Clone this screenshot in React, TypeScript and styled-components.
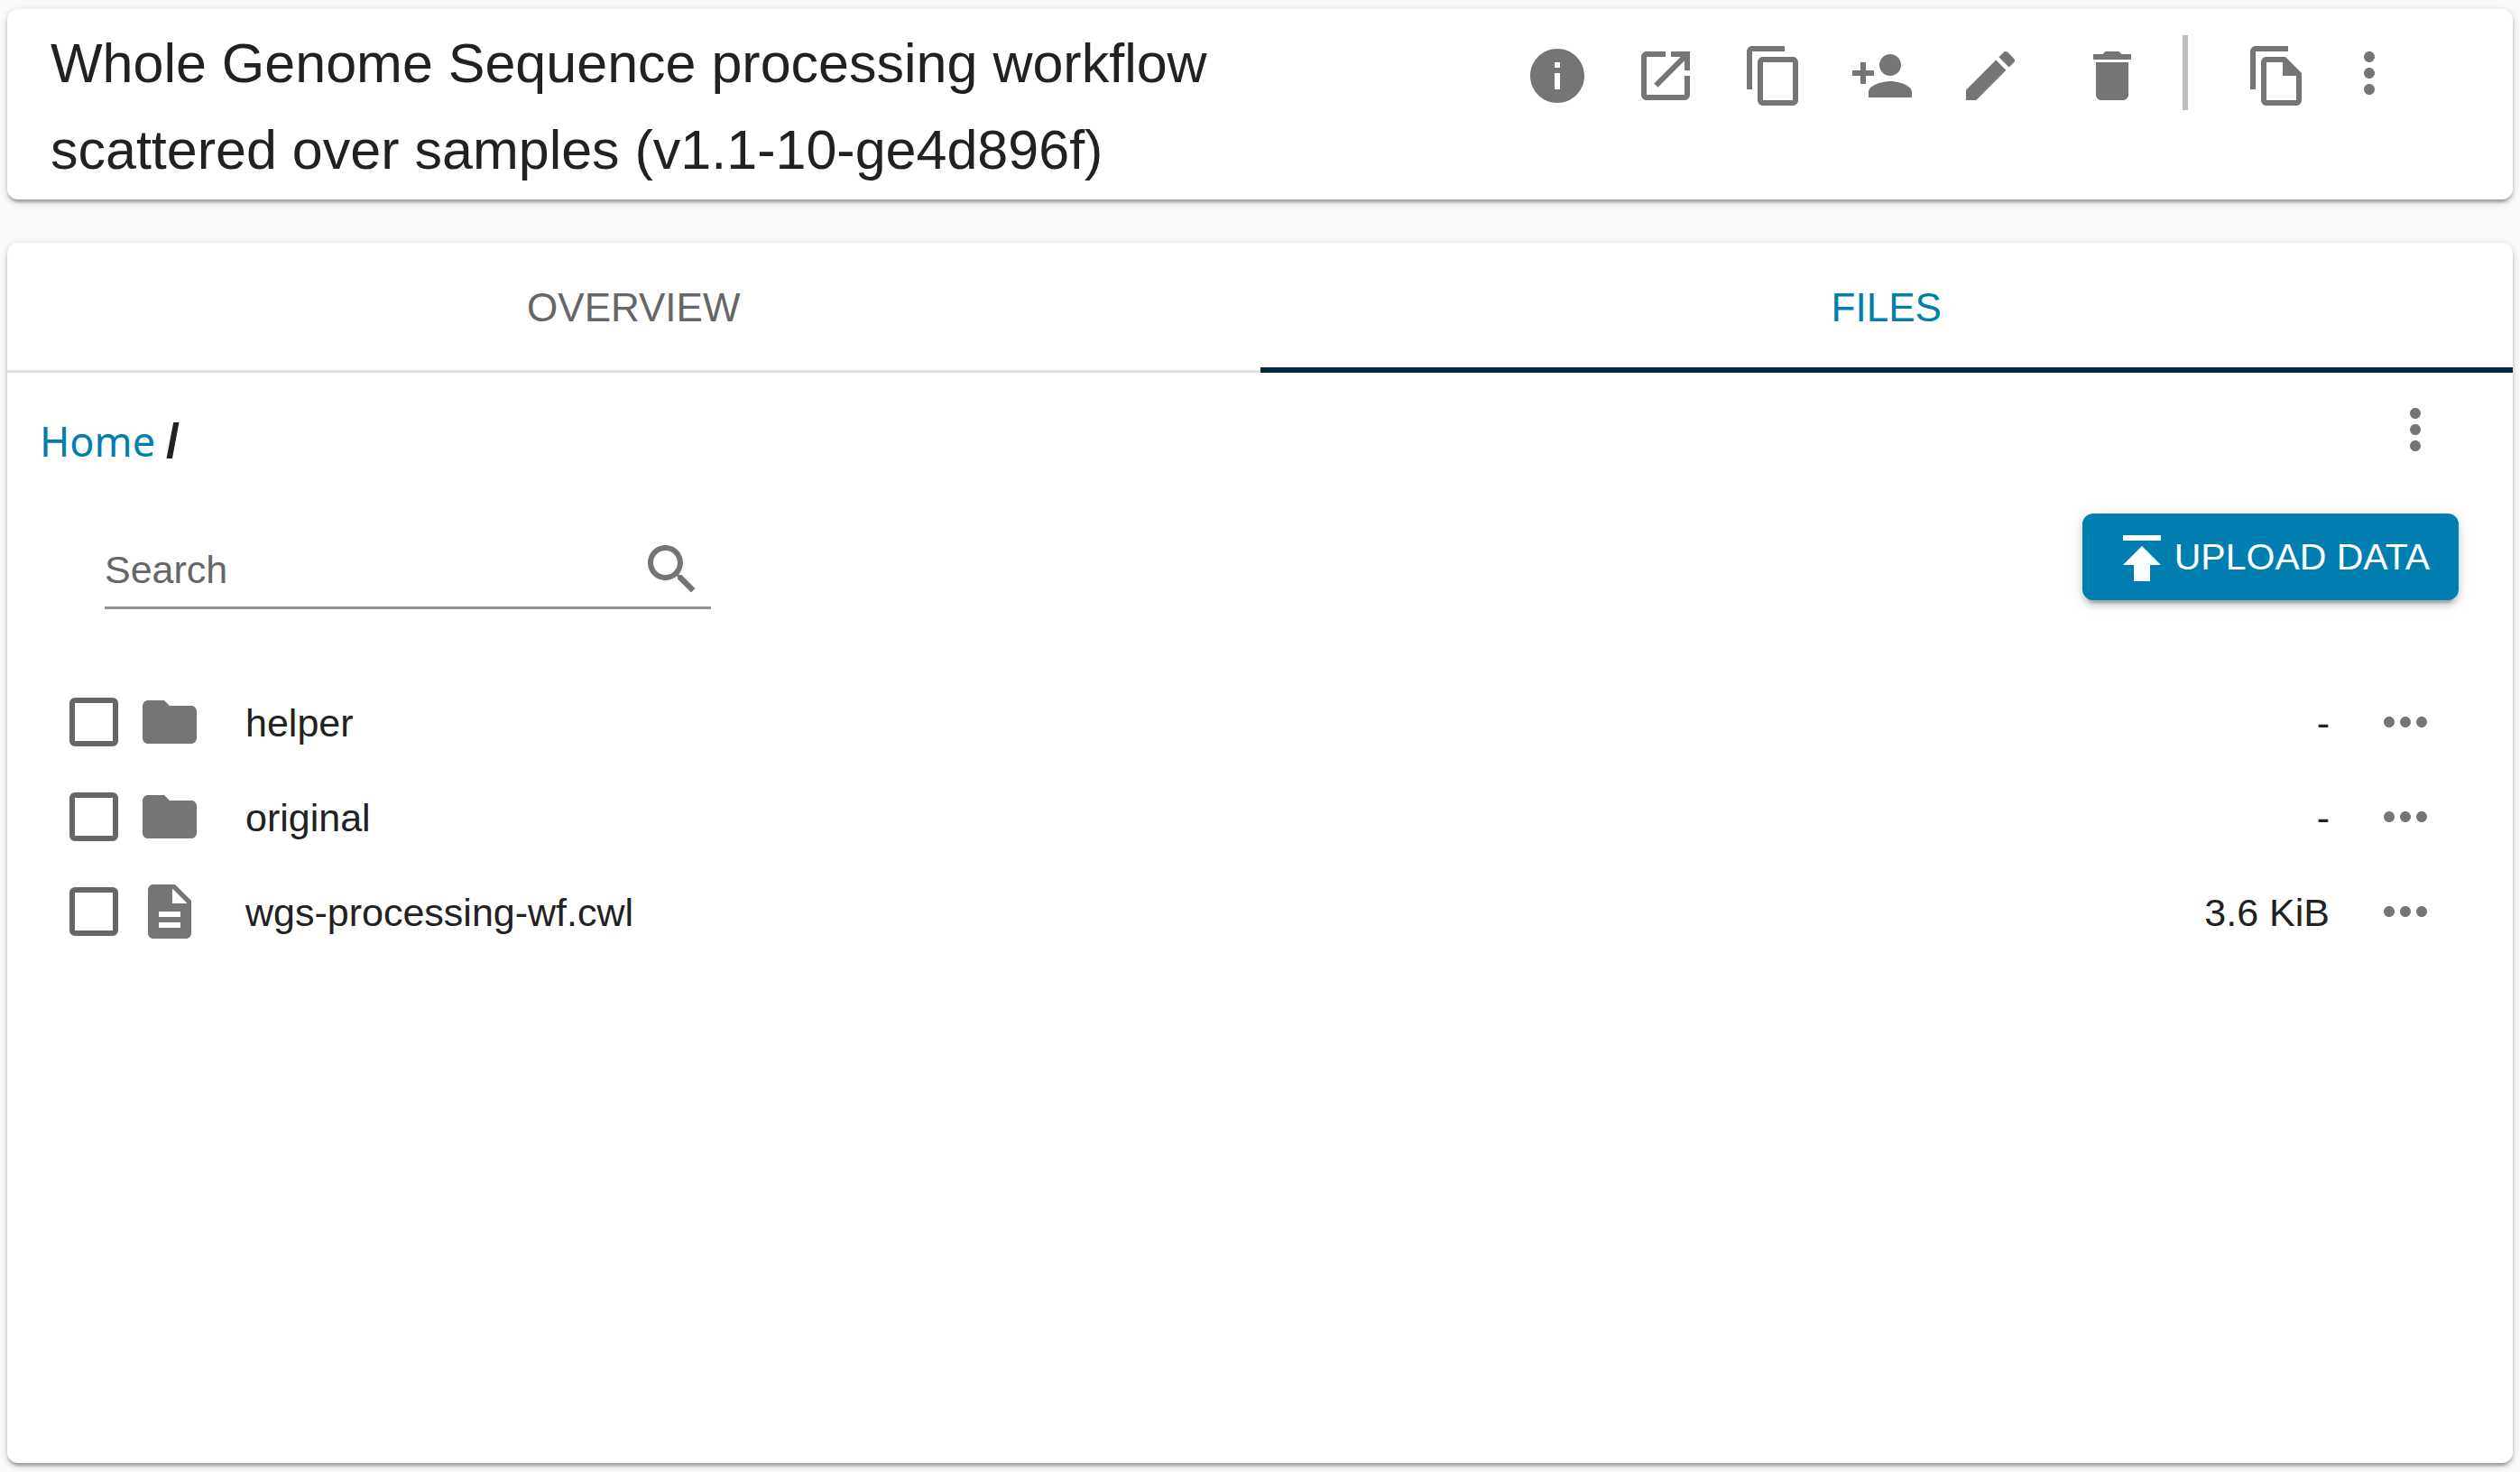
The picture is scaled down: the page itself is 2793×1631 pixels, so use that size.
import React from 'react';
import styled, { createGlobalStyle } from 'styled-components';

const color = {
  page: '#fafafa',
  surface: '#ffffff',
  text: '#212121',
  muted: '#666666',
  icon: '#757575',
  link: '#007eaf',
  indicator: '#05293e',
  line: '#e0e0e0',
  divider: '#bdbdbd',
  underline: '#949494',
};

const GlobalStyle = createGlobalStyle`
  *, *::before, *::after { box-sizing: border-box; }
  body {
    margin: 0;
    background: ${color.page};
    color: ${color.text};
    font-family: "Liberation Sans", Arial, sans-serif;
    font-size: 43px;
  }
  button, input { font-family: inherit; }
`;

const Page = styled.main`
  display: flex;
  flex-direction: column;
  gap: 48px;
  min-height: 100vh;
  padding: 10px 8px;
`;

const Card = styled.section`
  background: ${color.surface};
  border-radius: 12px;
  box-shadow:
    0 3px 9px rgba(0, 0, 0, 0.2),
    0 3px 3px rgba(0, 0, 0, 0.14),
    0 6px 3px -3px rgba(0, 0, 0, 0.12);
`;

const HeaderCard = styled(Card)`
  display: flex;
  justify-content: space-between;
  align-items: flex-start;
  padding: 12px 123px 7px 48px;
`;

const Title = styled.h1`
  flex: 0 1 50%;
  margin: 0;
  font-size: 61px;
  font-weight: 400;
  line-height: 96px;
`;

const Toolbar = styled.div`
  display: flex;
  align-items: flex-start;
  gap: 63px;
  padding-top: 17px;
`;

const ToolGroup = styled.div<{ $gap: number }>`
  display: flex;
  align-items: flex-start;
  gap: ${(p) => p.$gap}px;
`;

const IconButton = styled.button<{ $height?: number }>`
  display: flex;
  align-items: center;
  justify-content: center;
  flex: none;
  width: 72px;
  height: ${(p) => p.$height ?? 72}px;
  padding: 0;
  border: 0;
  background: none;
  color: ${color.icon};
  cursor: pointer;
`;

const Svg = styled.svg`
  display: block;
  flex: none;
  width: 72px;
  height: 72px;
  fill: currentColor;
`;

const Divider = styled.span`
  width: 6px;
  height: 83px;
  background: ${color.divider};
`;

const MainCard = styled(Card)`
  flex: 1;
`;

const Tabs = styled.div`
  display: grid;
  grid-template-columns: 1fr 1fr;
  box-shadow: inset 0 -3px ${color.line};
`;

const Tab = styled.button<{ $active?: boolean }>`
  height: 144px;
  padding: 0;
  border: 0;
  background: none;
  box-shadow: ${(p) => (p.$active ? `inset 0 -6px ${color.indicator}` : 'none')};
  color: ${(p) => (p.$active ? color.link : color.muted)};
  font-size: 44px;
  text-transform: uppercase;
  cursor: pointer;
`;

const PathRow = styled.div`
  display: flex;
  justify-content: space-between;
  align-items: flex-start;
  padding: 27px 72px 45px 36px;
`;

const Breadcrumbs = styled.nav`
  display: flex;
  align-items: center;
  gap: 12px;
  height: 72px;
  margin-top: 12px;
`;

const Crumb = styled.a`
  color: ${color.link};
  font-family: "Noto Sans", sans-serif;
  font-size: 45px;
  text-decoration: none;
`;

const Slash = styled.span`
  font-size: 54px;
  font-weight: 700;
`;

const ActionRow = styled.div`
  display: flex;
  justify-content: space-between;
  align-items: flex-start;
  padding: 0 60px 0 108px;
`;

const SearchField = styled.div`
  display: flex;
  align-items: flex-start;
  width: 672px;
  height: 80px;
  margin-top: 26px;
  padding-right: 7px;
  border-bottom: 3px solid ${color.underline};
`;

const SearchInput = styled.input`
  flex: 1;
  min-width: 0;
  height: 72px;
  padding: 0;
  border: 0;
  outline: 0;
  background: none;
  color: ${color.text};
  font-size: 43px;

  &::placeholder { color: ${color.muted}; opacity: 1; }
`;

const UploadButton = styled.button`
  display: flex;
  align-items: center;
  height: 96px;
  padding: 0 32px 0 30px;
  border: 0;
  border-radius: 12px;
  background: ${color.link};
  box-shadow:
    0 9px 3px -6px rgba(0, 0, 0, 0.2),
    0 6px 6px rgba(0, 0, 0, 0.14),
    0 3px 15px rgba(0, 0, 0, 0.12);
  color: #ffffff;
  font-size: 41px;
  text-transform: uppercase;
  white-space: nowrap;
  cursor: pointer;
`;

const FileList = styled.ul`
  display: flex;
  flex-direction: column;
  gap: 33px;
  margin: 0;
  padding: 89px 83px 89px 60px;
  list-style: none;
`;

const FileRow = styled.li`
  display: flex;
  align-items: center;
  gap: 48px;
  height: 72px;
`;

const FileLabel = styled.label`
  display: flex;
  flex: 1;
  align-items: center;
  gap: 48px;
`;

const FileMarks = styled.span`
  display: flex;
  align-items: center;
  gap: 21px;
  padding-left: 9px;
  color: ${color.icon};
`;

const FileText = styled.span`
  padding-top: 2px;
`;

const Checkbox = styled.input`
  appearance: none;
  width: 54px;
  height: 54px;
  margin: 0;
  border: 6px solid ${color.muted};
  border-radius: 6px;
  cursor: pointer;

  &:checked { background: ${color.link}; }
`;

const paths = {
  info: 'M12 2C6.48 2 2 6.48 2 12s4.48 10 10 10 10-4.48 10-10S17.52 2 12 2zm1 15h-2v-6h2v6zm0-8h-2V7h2v2z',
  open: 'M19 19H5V5h7V3H5c-1.11 0-2 .9-2 2v14c0 1.1.89 2 2 2h14c1.1 0 2-.9 2-2v-7h-2v7zM14 3v2h3.59l-9.83 9.83 1.41 1.41L19 6.41V10h2V3h-7z',
  copy: 'M16 1H4c-1.1 0-2 .9-2 2v14h2V3h12V1zm3 4H8c-1.1 0-2 .9-2 2v14c0 1.1.9 2 2 2h11c1.1 0 2-.9 2-2V7c0-1.1-.9-2-2-2zm0 16H8V7h11v14z',
  share: 'M15 12c2.21 0 4-1.79 4-4s-1.79-4-4-4-4 1.79-4 4 1.79 4 4 4zm-9-2V7H4v3H1v2h3v3h2v-3h3v-2H6zm9 4c-2.67 0-8 1.34-8 4v2h16v-2c0-2.66-5.33-4-8-4z',
  edit: 'M3 17.25V21h3.75L17.81 9.94l-3.75-3.75L3 17.25zM20.71 7.04c.39-.39.39-1.02 0-1.41l-2.34-2.34c-.39-.39-1.02-.39-1.41 0l-1.83 1.83 3.75 3.75 1.83-1.83z',
  trash: 'M6 19c0 1.1.9 2 2 2h8c1.1 0 2-.9 2-2V7H6v12zM19 4h-3.5l-1-1h-5l-1 1H5v2h14V4z',
  fileCopy: 'M16 1H4c-1.1 0-2 .9-2 2v14h2V3h12V1zm-1 4H8c-1.1 0-1.99.9-1.99 2L6 21c0 1.1.89 2 1.99 2H19c1.1 0 2-.9 2-2V11l-6-6zM8 21V7h6v5h5v9H8z',
  moreVert: 'M12 8c1.1 0 2-.9 2-2s-.9-2-2-2-2 .9-2 2 .9 2 2 2zm0 2c-1.1 0-2 .9-2 2s.9 2 2 2 2-.9 2-2-.9-2-2-2zm0 6c-1.1 0-2 .9-2 2s.9 2 2 2 2-.9 2-2-.9-2-2-2z',
  moreHoriz: 'M6 10c-1.1 0-2 .9-2 2s.9 2 2 2 2-.9 2-2-.9-2-2-2zm12 0c-1.1 0-2 .9-2 2s.9 2 2 2 2-.9 2-2-.9-2-2-2zm-6 0c-1.1 0-2 .9-2 2s.9 2 2 2 2-.9 2-2-.9-2-2-2z',
  search: 'M15.5 14h-.79l-.28-.27C15.41 12.59 16 11.11 16 9.5 16 5.91 13.09 3 9.5 3S3 5.91 3 9.5 5.91 16 9.5 16c1.61 0 3.09-.59 4.23-1.57l.27.28v.79l5 4.99L20.49 19l-4.99-5zm-6 0C7.01 14 5 11.99 5 9.5S7.01 5 9.5 5 14 7.01 14 9.5 11.99 14 9.5 14z',
  upload: 'M5 4v2h14V4H5zm0 11h4v6h6v-6h4l-7-7-7 7z',
  folder: 'M10 4H4c-1.1 0-1.99.9-1.99 2L2 18c0 1.1.9 2 2 2h16c1.1 0 2-.9 2-2V8c0-1.1-.9-2-2-2h-8l-2-2z',
  file: 'M14 2H6c-1.1 0-1.99.9-1.99 2L4 20c0 1.1.89 2 1.99 2H18c1.1 0 2-.9 2-2V8l-6-6zm2 16H8v-2h8v2zm0-4H8v-2h8v2zm-3-5V3.5L18.5 9H13z',
};

type IconName = keyof typeof paths;

const Icon = ({ name }: { name: IconName }) => (
  <Svg viewBox="0 0 24 24" aria-hidden="true">
    <path d={paths[name]} />
  </Svg>
);

const actions: { icon: IconName; label: string }[] = [
  { icon: 'info', label: 'View details' },
  { icon: 'open', label: 'Open in new tab' },
  { icon: 'copy', label: 'Copy to clipboard' },
  { icon: 'share', label: 'Share' },
  { icon: 'edit', label: 'Edit collection' },
];

const files: { name: string; size: string; icon: IconName }[] = [
  { name: 'helper', size: '-', icon: 'folder' },
  { name: 'original', size: '-', icon: 'folder' },
  { name: 'wgs-processing-wf.cwl', size: '3.6 KiB', icon: 'file' },
];

export default function App() {
  return (
    <>
      <GlobalStyle />
      <Page>
        <HeaderCard>
          <Title>Whole Genome Sequence processing workflow scattered over samples (v1.1-10-ge4d896f)</Title>
          <Toolbar>
            <ToolGroup $gap={48}>
              {actions.map((a) => (
                <IconButton key={a.icon} $height={90} aria-label={a.label}>
                  <Icon name={a.icon} />
                </IconButton>
              ))}
            </ToolGroup>
            <ToolGroup $gap={42}>
              <IconButton $height={90} aria-label="Move to trash">
                <Icon name="trash" />
              </IconButton>
              <Divider />
            </ToolGroup>
            <ToolGroup $gap={30}>
              <IconButton $height={90} aria-label="Make a copy">
                <Icon name="fileCopy" />
              </IconButton>
              <IconButton $height={84} aria-label="More options">
                <Icon name="moreVert" />
              </IconButton>
            </ToolGroup>
          </Toolbar>
        </HeaderCard>

        <MainCard>
          <Tabs role="tablist">
            <Tab role="tab" aria-selected={false}>Overview</Tab>
            <Tab role="tab" aria-selected $active>Files</Tab>
          </Tabs>

          <PathRow>
            <Breadcrumbs aria-label="Path">
              <Crumb href="#home">Home</Crumb>
              <Slash>/</Slash>
            </Breadcrumbs>
            <IconButton aria-label="Folder options">
              <Icon name="moreVert" />
            </IconButton>
          </PathRow>

          <ActionRow>
            <SearchField>
              <SearchInput type="text" placeholder="Search" aria-label="Search" />
              <IconButton aria-label="Run search">
                <Icon name="search" />
              </IconButton>
            </SearchField>
            <UploadButton>
              <Icon name="upload" />
              Upload data
            </UploadButton>
          </ActionRow>

          <FileList>
            {files.map((f) => (
              <FileRow key={f.name}>
                <FileLabel>
                  <FileMarks>
                    <Checkbox type="checkbox" />
                    <Icon name={f.icon} />
                  </FileMarks>
                  <FileText>{f.name}</FileText>
                </FileLabel>
                <FileText>{f.size}</FileText>
                <IconButton aria-label={`Options for ${f.name}`}>
                  <Icon name="moreHoriz" />
                </IconButton>
              </FileRow>
            ))}
          </FileList>
        </MainCard>
      </Page>
    </>
  );
}
